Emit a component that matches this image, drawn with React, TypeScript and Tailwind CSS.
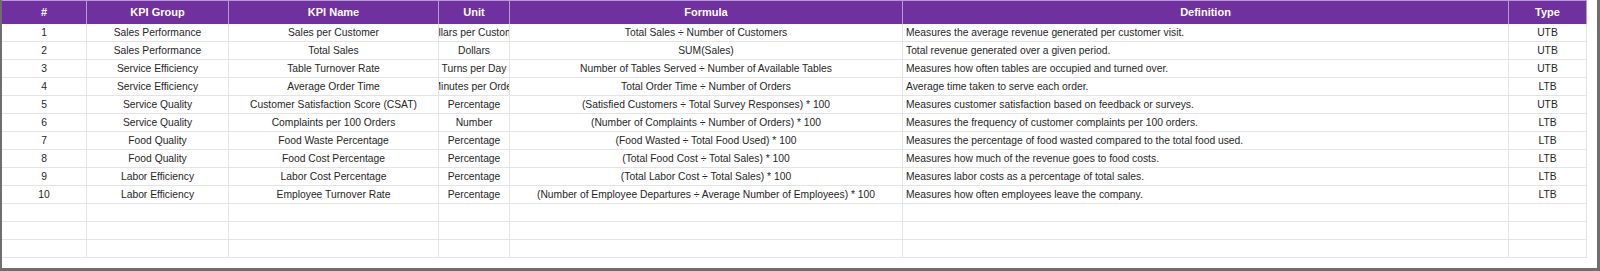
import React from 'react';

type Kpi = {
  id: number;
  group: string;
  name: string;
  unit: string;
  formula: string;
  definition: string;
  type: string;
};

const kpis: Kpi[] = [
  { id: 1, group: 'Sales Performance', name: 'Sales per Customer', unit: 'Dollars per Customer', formula: 'Total Sales ÷ Number of Customers', definition: 'Measures the average revenue generated per customer visit.', type: 'UTB' },
  { id: 2, group: 'Sales Performance', name: 'Total Sales', unit: 'Dollars', formula: 'SUM(Sales)', definition: 'Total revenue generated over a given period.', type: 'UTB' },
  { id: 3, group: 'Service Efficiency', name: 'Table Turnover Rate', unit: 'Turns per Day', formula: 'Number of Tables Served ÷ Number of Available Tables', definition: 'Measures how often tables are occupied and turned over.', type: 'UTB' },
  { id: 4, group: 'Service Efficiency', name: 'Average Order Time', unit: 'Minutes per Order', formula: 'Total Order Time ÷ Number of Orders', definition: 'Average time taken to serve each order.', type: 'LTB' },
  { id: 5, group: 'Service Quality', name: 'Customer Satisfaction Score (CSAT)', unit: 'Percentage', formula: '(Satisfied Customers ÷ Total Survey Responses) * 100', definition: 'Measures customer satisfaction based on feedback or surveys.', type: 'UTB' },
  { id: 6, group: 'Service Quality', name: 'Complaints per 100 Orders', unit: 'Number', formula: '(Number of Complaints ÷ Number of Orders) * 100', definition: 'Measures the frequency of customer complaints per 100 orders.', type: 'LTB' },
  { id: 7, group: 'Food Quality', name: 'Food Waste Percentage', unit: 'Percentage', formula: '(Food Wasted ÷ Total Food Used) * 100', definition: 'Measures the percentage of food wasted compared to the total food used.', type: 'LTB' },
  { id: 8, group: 'Food Quality', name: 'Food Cost Percentage', unit: 'Percentage', formula: '(Total Food Cost ÷ Total Sales) * 100', definition: 'Measures how much of the revenue goes to food costs.', type: 'LTB' },
  { id: 9, group: 'Labor Efficiency', name: 'Labor Cost Percentage', unit: 'Percentage', formula: '(Total Labor Cost ÷ Total Sales) * 100', definition: 'Measures labor costs as a percentage of total sales.', type: 'LTB' },
  { id: 10, group: 'Labor Efficiency', name: 'Employee Turnover Rate', unit: 'Percentage', formula: '(Number of Employee Departures ÷ Average Number of Employees) * 100', definition: 'Measures how often employees leave the company.', type: 'LTB' },
];

const headers = ['#', 'KPI Group', 'KPI Name', 'Unit', 'Formula', 'Definition', 'Type'];

const cols = 'grid grid-cols-[85px_142px_210px_71px_393px_606px_78px]';

function Cell({ children, left }: { children?: React.ReactNode; left?: boolean }) {
  return (
    <div
      className={
        'h-[18px] border-r border-b border-[#e4e4e4] overflow-hidden whitespace-nowrap flex items-center ' +
        (left ? 'justify-start pl-[3px]' : 'justify-center')
      }
    >
      <span className="shrink-0">{children}</span>
    </div>
  );
}

export default function App() {
  return (
    <div className="w-[1600px] h-[271px] bg-white border-l-2 border-r-[3px] border-b-[3px] border-[#6e6e6e] font-['Liberation_Sans',Arial,sans-serif] text-[#262626]">
      <div className="w-[1585px]">
        <div className={cols + ' h-[24px] bg-[#7030a0] border-t border-[#b69bd3]'}>
          {headers.map((h) => (
            <div
              key={h}
              className="border-r border-[#b69bd3] flex items-center justify-center text-white font-bold text-[11px]"
            >
              {h}
            </div>
          ))}
        </div>
        <div className="text-[10.3px]">
          {kpis.map((k) => (
            <div key={k.id} className={cols}>
              <Cell>{k.id}</Cell>
              <Cell>{k.group}</Cell>
              <Cell>{k.name}</Cell>
              <Cell>{k.unit}</Cell>
              <Cell>{k.formula}</Cell>
              <Cell left>{k.definition}</Cell>
              <Cell>{k.type}</Cell>
            </div>
          ))}
          {[0, 1, 2].map((i) => (
            <div key={'e' + i} className={cols}>
              {headers.map((h) => (
                <Cell key={h} />
              ))}
            </div>
          ))}
        </div>
      </div>
    </div>
  );
}
